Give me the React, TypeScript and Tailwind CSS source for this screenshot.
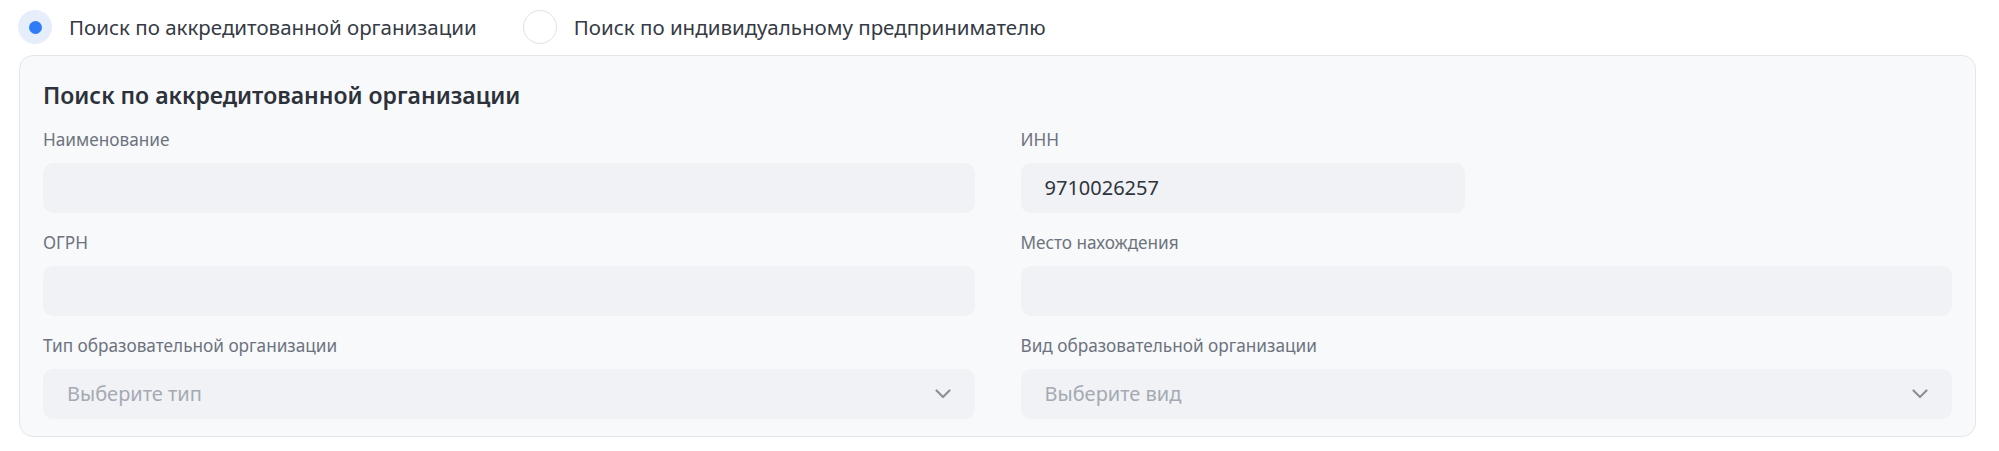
import { useState } from "react";

// Поля формы поиска
type Field = {
  label: string;
  value?: string;
  placeholder?: string;
  select?: boolean;
  narrow?: boolean;
};

const fields: Field[] = [
  { label: "Наименование" },
  { label: "ИНН", value: "9710026257", narrow: true },
  { label: "ОГРН" },
  { label: "Место нахождения" },
  { label: "Тип образовательной организации", placeholder: "Выберите тип", select: true },
  { label: "Вид образовательной организации", placeholder: "Выберите вид", select: true },
];

function Chevron() {
  return (
    <svg width="16" height="10" viewBox="0 0 16 10" fill="none">
      <path d="M1.5 1.5L8 8l6.5-6.5" stroke="#8b919b" strokeWidth="2.2" strokeLinecap="round" strokeLinejoin="round" />
    </svg>
  );
}

function Radio({ checked, label, onClick }: { checked: boolean; label: string; onClick: () => void }) {
  return (
    <button type="button" onClick={onClick} className="flex items-center gap-[17px] cursor-pointer">
      {checked ? (
        <span className="w-[34px] h-[34px] rounded-full bg-[#e6eefc] flex items-center justify-center">
          <span className="w-[13px] h-[13px] rounded-full bg-[#2f7cf6]" />
        </span>
      ) : (
        <span className="w-[34px] h-[34px] rounded-full bg-white border-[1.5px] border-[#e0e2e6]" />
      )}
      <span className="text-[20.5px] leading-[26px] text-[#353a44]">{label}</span>
    </button>
  );
}

export default function App() {
  const [mode, setMode] = useState(0);

  return (
    <div className="w-full h-[451px] bg-white font-['Noto_Sans',sans-serif]">

      <div className="flex items-center gap-[46px] pl-[18px] pt-[10px]">
        <Radio checked={mode === 0} label="Поиск по аккредитованной организации" onClick={() => setMode(0)} />
        <Radio checked={mode === 1} label="Поиск по индивидуальному предпринимателю" onClick={() => setMode(1)} />
      </div>

      <div className="mt-[11px] ml-[19px] w-[1957px] rounded-[14px] border border-[#e4e6ea] bg-[#f8f9fb] px-[23px] pt-[25px] pb-[17px]">

        <h2 className="text-[23px] leading-[28px] font-semibold text-[#2c313a]">
          {mode === 0 ? "Поиск по аккредитованной организации" : "Поиск по индивидуальному предпринимателю"}
        </h2>

        <div className="mt-[21px] grid grid-cols-2 gap-x-[46px] gap-y-[20px]">
          {fields.map((f) => (
            <div key={f.label}>
              <div className="text-[17.2px] leading-[20px] text-[#6d737e] mb-[13px]">{f.label}</div>
              <div className={`h-[50px] rounded-[10px] bg-[#f1f2f5] flex items-center justify-between pl-[24px] pr-[24px] ${f.narrow ? "w-[444px]" : "w-full"}`}>
                {f.value ? (
                  <span className="text-[20px] text-[#2f343d]">{f.value}</span>
                ) : (
                  <span className="text-[20px] text-[#a4aab3]">{f.placeholder ?? ""}</span>
                )}
                {f.select && <Chevron />}
              </div>
            </div>
          ))}
        </div>

      </div>

    </div>
  );
}
